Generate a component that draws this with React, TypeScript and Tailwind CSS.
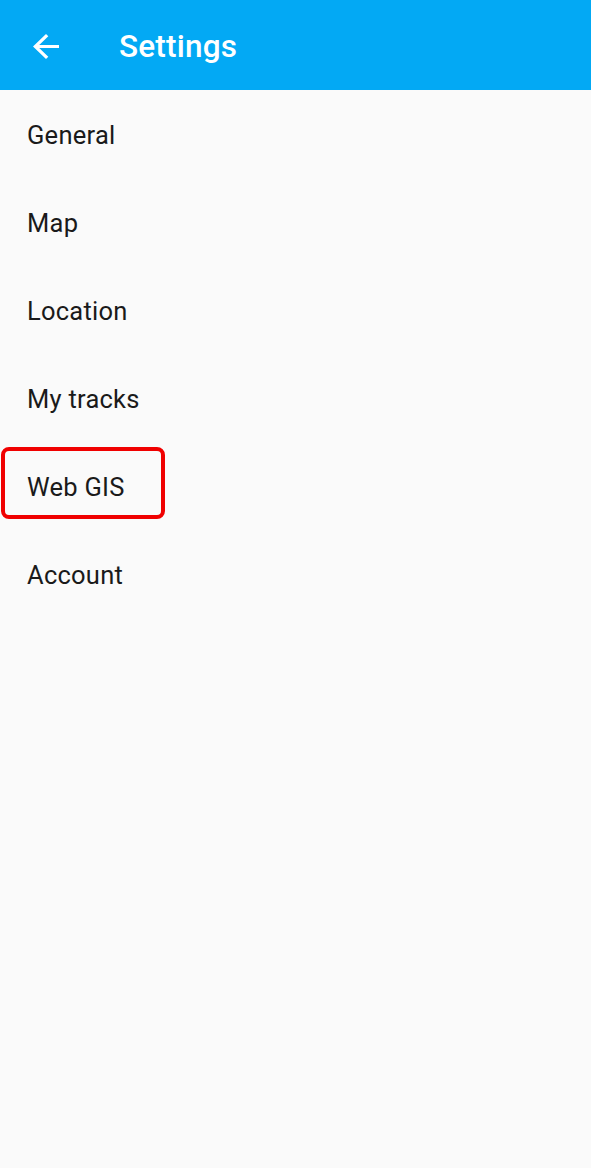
import React from "react";

const items = ["General", "Map", "Location", "My tracks", "Web GIS", "Account"];

export default function App() {
  return (
    <div className="w-[591px] h-[1168px] bg-[#fafafa] flex flex-col" style={{ fontFamily: "Roboto, 'Noto Sans', sans-serif" }}>
      <div className="h-[90px] bg-[#03a9f4] flex items-center shrink-0">
        <div className="w-[119px] pl-[33px] flex items-center pt-[2px]">
          <svg width="26" height="25" viewBox="4 4 16 16" preserveAspectRatio="none" fill="white">
            <path d="M20 11H7.83l5.59-5.59L12 4l-8 8 8 8 1.41-1.41L7.83 13H20v-2z" />
          </svg>
        </div>
        <span className="text-white text-[31.5px] font-medium leading-none pt-[3px] tracking-[0.2px]">Settings</span>
      </div>
      <div className="flex flex-col">
        {items.map((it) => (
          <div key={it} className="h-[88px] flex items-center px-[27px] relative">
            {it === "Web GIS" && (
              <div className="absolute left-[1px] top-[5px] w-[164px] h-[72px] border-4 border-[#f00000] rounded-[8px]" />
            )}
            <span className="text-[25.5px] font-normal text-[#1a1a1a] leading-none pt-[3px] tracking-[0.25px]">{it}</span>
          </div>
        ))}
      </div>
    </div>
  );
}
